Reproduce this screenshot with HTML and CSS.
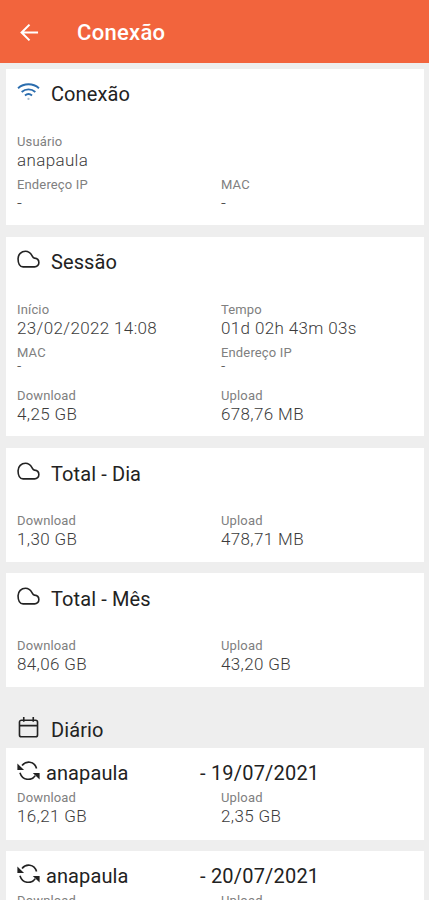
FILE: index.html
```html
<!DOCTYPE html>
<html lang="pt-BR">
<head>
<meta charset="utf-8">
<meta name="viewport" content="width=device-width, initial-scale=1">
<title>Conexão</title>
<link rel="stylesheet" href="styles.css">
</head>
<body>
<svg class="defs" width="0" height="0" aria-hidden="true">
  <symbol id="cloud" viewBox="0 0 24 20"><path d="M6.300 17.800h12a4.500 4.500 0 0 0 4.600-4.600c0-2.700-1.900-4.500-4.700-4.700-1.600-.1-1.800-1.200-2.700-2.800C14.200 3.300 11.800 1.300 8.800 1.300 4.500 1.300 1 4.600 1 9.200c0 5.100 1.800 8.600 5.300 8.600z"/></symbol>
  <symbol id="sync" viewBox="0 0 24 20"><path class="head" d="M.3 2.500v7h7zM23.700 12.500v7L16.500 12.500z"/><path d="M5.200 4.800C9.200-.6 18-.2 20.500 7.800M3 12.300c2.700 8.400 12 9 16 3.200"/></symbol>
</svg>
<header class="bar">
  <svg class="back" viewBox="0 0 20 20"><path d="M19 10H2M10 1.700 1.700 10l8.300 8.300"/></svg>
  <h1 class="bar-title">Conexão</h1>
</header>
<main class="content">
  <section class="card">
    <h2 class="title"><svg class="icon wifi" viewBox="0 0 24 20"><path d="M1 6.500c6.200-5.500 15.800-5.500 22 0M4.800 10.500c4.200-3.700 10.200-3.700 14.400 0M8.300 14.300c2.200-1.900 5.200-1.900 7.400 0"/><circle cx="12" cy="17.800" r="1.200"/></svg>Conexão</h2>
    <dl class="grid">
      <div class="field wide"><dt>Usuário</dt><dd>anapaula</dd></div>
      <div class="field"><dt>Endereço IP</dt><dd>-</dd></div>
      <div class="field"><dt>MAC</dt><dd>-</dd></div>
    </dl>
  </section>
  <section class="card">
    <h2 class="title"><svg class="icon"><use href="#cloud"/></svg>Sessão</h2>
    <dl class="grid">
      <div class="field"><dt>Início</dt><dd>23/02/2022 14:08</dd></div>
      <div class="field"><dt>Tempo</dt><dd>01d 02h 43m 03s</dd></div>
      <div class="field"><dt>MAC</dt><dd class="empty">-</dd></div>
      <div class="field"><dt>Endereço IP</dt><dd class="empty">-</dd></div>
      <div class="field"><dt>Download</dt><dd>4,25 GB</dd></div>
      <div class="field"><dt>Upload</dt><dd>678,76 MB</dd></div>
    </dl>
  </section>
  <section class="card total">
    <h2 class="title"><svg class="icon"><use href="#cloud"/></svg>Total - Dia</h2>
    <dl class="grid">
      <div class="field"><dt>Download</dt><dd>1,30 GB</dd></div>
      <div class="field"><dt>Upload</dt><dd>478,71 MB</dd></div>
    </dl>
  </section>
  <section class="card total">
    <h2 class="title"><svg class="icon"><use href="#cloud"/></svg>Total - Mês</h2>
    <dl class="grid">
      <div class="field"><dt>Download</dt><dd>84,06 GB</dd></div>
      <div class="field"><dt>Upload</dt><dd>43,20 GB</dd></div>
    </dl>
  </section>
  <h2 class="title daily"><svg class="icon" viewBox="0 0 24 20"><path d="M4.500 2.300h15a2 2 0 0 1 2 2v13.500a2 2 0 0 1-2 2h-15a2 2 0 0 1-2-2V4.300a2 2 0 0 1 2-2zM2.500 8h19M7 -1v5M17 -1v5"/></svg>Diário</h2>
  <section class="card entry">
    <h3 class="title"><svg class="icon"><use href="#sync"/></svg><span class="user">anapaula</span><span class="date">- 19/07/2021</span></h3>
    <dl class="grid">
      <div class="field"><dt>Download</dt><dd>16,21 GB</dd></div>
      <div class="field"><dt>Upload</dt><dd>2,35 GB</dd></div>
    </dl>
  </section>
  <section class="card entry">
    <h3 class="title"><svg class="icon"><use href="#sync"/></svg><span class="user">anapaula</span><span class="date">- 20/07/2021</span></h3>
    <dl class="grid">
      <div class="field"><dt>Download</dt></div>
      <div class="field"><dt>Upload</dt></div>
    </dl>
  </section>
</main>
</body>
</html>
```
FILE: styles.css
```css
* { box-sizing: border-box; margin: 0; padding: 0; }
html, body { height: 900px; overflow: hidden; }
body { background: #eee; color: #222; font-family: Roboto, sans-serif; }
.defs { display: block; }
svg { fill: none; stroke: currentColor; flex: none; overflow: visible; }
.bar { height: 63px; background: #f2643d; color: #fff; display: flex; align-items: center; padding: 2px 20px 0; gap: 38px; }
.back { width: 19px; height: 19px; stroke-width: 2.2; }
.bar-title { font-size: 22px; font-weight: 500; line-height: 26px; letter-spacing: .3px; }
.content { padding: 6px 5px 0 6px; }
.card { background: #fff; padding: 12px 11px 13px; margin-bottom: 12px; }
.title { display: flex; align-items: center; height: 26px; font-size: 20px; font-weight: 400; letter-spacing: .1px; }
.icon { width: 23px; height: 19px; margin-right: 11px; stroke-width: 1.7; position: relative; top: -2.500px; }
.wifi { color: #2b6dae; stroke-width: 2; }
.wifi circle { fill: #a8bdcc; stroke: none; }
.head { fill: currentColor; stroke: none; }
.grid { display: grid; grid-template-columns: 204px 1fr; row-gap: 7px; margin-top: 26px; }
.wide { grid-column: 1 / -1; }
dt { font-size: 13px; line-height: 18px; letter-spacing: .15px; color: #808080; }
dd { font-size: 17px; line-height: 18px; font-weight: 300; letter-spacing: .36px; color: #3c3c3c; }
.empty { height: 18px; line-height: 9px; font-size: 15px; }
.total { padding-bottom: 13.500px; margin-bottom: 11.500px; }
.total .title { height: 27px; }
.total .grid { margin-top: 25px; }
.daily { padding-left: 11px; height: 24px; margin: 31px 0 6.500px; }
.entry { margin-bottom: 11px; padding-bottom: 14.500px; }
.entry .grid { margin-top: 2.500px; }
.entry .title { height: 26.500px; }
.entry .icon { margin-right: 6px; top: -2.500px; }
.user { width: 154px; }
.date { letter-spacing: .2px; }
```
